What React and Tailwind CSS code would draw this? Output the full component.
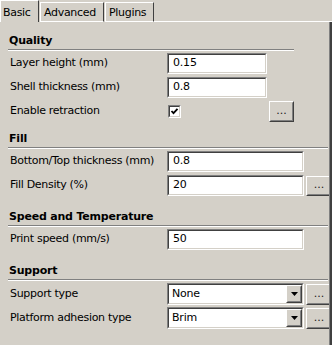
import React from "react";

function Sunken({ className = "", children }) {
  return (
    <div className={`border border-t-[#808080] border-l-[#808080] border-b-white border-r-white ${className}`}>
      <div className="h-full w-full border border-t-[#404040] border-l-[#404040] border-b-[#d4d0c8] border-r-[#d4d0c8] bg-white">
        {children}
      </div>
    </div>
  );
}

function Raised({ className = "", children }) {
  return (
    <div className={`shrink-0 border border-t-white border-l-white border-b-[#404040] border-r-[#404040] ${className}`}>
      <div className="flex h-full w-full items-center justify-center border border-t-[#d4d0c8] border-l-[#d4d0c8] border-b-[#808080] border-r-[#808080] bg-[#d4d0c8]">
        {children}
      </div>
    </div>
  );
}

function Header({ title, sepWidth, mt }) {
  return (
    <div className={mt}>
      <div className="flex h-[16px] items-center pl-px text-[11px] font-bold tracking-[-0.2px] text-black">{title}</div>
      <div className={`h-px bg-[#808080] ${sepWidth}`} />
      <div className={`h-px bg-white ${sepWidth}`} />
    </div>
  );
}

function Label({ children }) {
  return (
    <div className="w-[159px] shrink-0 pl-[2px] text-[11px] tracking-[-0.3px] text-black">{children}</div>
  );
}

function TextBox({ value, w }) {
  return (
    <Sunken className={`h-[21px] shrink-0 ${w}`}>
      <div className="flex h-full items-center pl-[4px] text-[11px] tracking-[-0.2px] text-black">{value}</div>
    </Sunken>
  );
}

function Dots() {
  return <span className="text-[11px] leading-none text-[#202020] -mt-[2px]">...</span>;
}

function Combo({ value }) {
  return (
    <Sunken className="h-[22px] w-[137px] shrink-0">
      <div className="flex h-full items-center">
        <div className="flex-1 pl-[3px] text-[11px] tracking-[-0.2px] text-black">{value}</div>
        <Raised className="h-[18px] w-[16px]">
          <svg width="7" height="4" viewBox="0 0 7 4">
            <path d="M0 0h7L3.5 4z" fill="#000" />
          </svg>
        </Raised>
      </div>
    </Sunken>
  );
}

export default function App() {
  return (
    <div className="relative h-[345px] w-[332px] overflow-hidden bg-[#d4d0c8] font-['DejaVu_Sans',sans-serif]">
      {/* tabs */}
      <div className="flex h-[22px] items-end">
        <div className="flex h-[22px] w-[39px] items-start border-l border-t border-l-white border-t-white border-r border-r-[#404040] pl-[2px] pt-[4px] text-[11px] tracking-[-0.3px] text-black">
          Basic
        </div>
        <div className="ml-px flex h-[20px] w-[64px] items-start border border-l-white border-t-white border-r-[#404040] border-b-white pl-[3px] pt-[2px] text-[11px] tracking-[-0.3px] text-black">
          Advanced
        </div>
        <div className="ml-px flex h-[20px] w-[49px] items-start border border-l-white border-t-white border-r-[#404040] border-b-white pl-[3px] pt-[2px] text-[11px] tracking-[-0.3px] text-black">
          Plugins
        </div>
        <div className="h-px flex-1 bg-white" />
      </div>

      {/* panel */}
      <div className="h-[323px] w-[332px] overflow-hidden border-r-2 border-r-[#404040]">
        <div className="h-full w-[330px] overflow-hidden border-r border-r-[#808080] pl-2">
          <Header title="Quality" sepWidth="w-[286px]" mt="mt-[11px]" />
          <div className="mt-[2px] flex flex-col gap-[3px]">
            <div className="flex h-[21px] items-center">
              <Label>Layer height (mm)</Label>
              <TextBox value="0.15" w="w-[100px]" />
            </div>
            <div className="flex h-[21px] items-center">
              <Label>Shell thickness (mm)</Label>
              <TextBox value="0.8" w="w-[100px]" />
            </div>
            <div className="flex h-[21px] items-center">
              <Label>Enable retraction</Label>
              <div className="ml-px w-[101px] shrink-0">
                <Sunken className="h-[13px] w-[13px]">
                  <svg width="9" height="9" viewBox="0 0 9 9" className="block">
                    <path d="M1.5 4l2 2.2L7.5 1.8" stroke="#000" strokeWidth="1.8" fill="none" />
                  </svg>
                </Sunken>
              </div>
              <Raised className="h-[21px] w-[25px]">
                <Dots />
              </Raised>
            </div>
          </div>

          <Header title="Fill" sepWidth="w-[320px]" mt="mt-[9px]" />
          <div className="mt-[2px] flex flex-col gap-[3px]">
            <div className="flex h-[21px] items-center">
              <Label>Bottom/Top thickness (mm)</Label>
              <TextBox value="0.8" w="w-[137px]" />
            </div>
            <div className="flex h-[21px] items-center">
              <Label>Fill Density (%)</Label>
              <TextBox value="20" w="w-[137px]" />
              <Raised className="ml-[2px] h-[20px] w-[26px]">
                <Dots />
              </Raised>
            </div>
          </div>

          <Header title="Speed and Temperature" sepWidth="w-[320px]" mt="mt-[13px]" />
          <div className="mt-[2px] flex flex-col gap-[3px]">
            <div className="flex h-[21px] items-center">
              <Label>Print speed (mm/s)</Label>
              <TextBox value="50" w="w-[137px]" />
            </div>
          </div>

          <Header title="Support" sepWidth="w-[320px]" mt="mt-[13px]" />
          <div className="mt-[2px] flex flex-col gap-[2px]">
            <div className="flex h-[22px] items-center">
              <Label>Support type</Label>
              <Combo value="None" />
              <Raised className="ml-[2px] h-[21px] w-[26px]">
                <Dots />
              </Raised>
            </div>
            <div className="flex h-[22px] items-center">
              <Label>Platform adhesion type</Label>
              <Combo value="Brim" />
              <Raised className="ml-[2px] h-[21px] w-[26px]">
                <Dots />
              </Raised>
            </div>
          </div>
        </div>
      </div>
    </div>
  );
}
